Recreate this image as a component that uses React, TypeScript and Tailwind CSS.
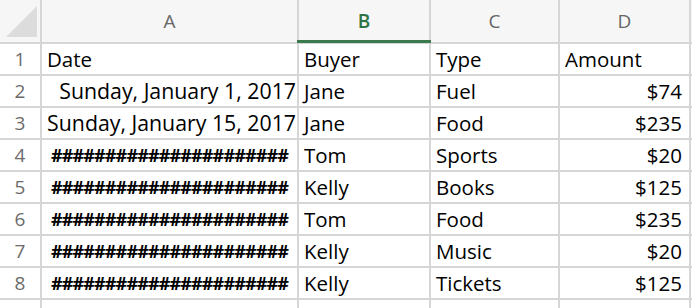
import React from 'react';

const font = { fontFamily: '"Open Sans", Lato, "Liberation Sans", sans-serif' };

type Row = { date: string; dateMode: 'text' | 'hash'; buyer: string; type: string; amount: string };

const rows: Row[] = [
  { date: 'Sunday, January 1, 2017', dateMode: 'text', buyer: 'Jane', type: 'Fuel', amount: '$74' },
  { date: 'Sunday, January 15, 2017', dateMode: 'text', buyer: 'Jane', type: 'Food', amount: '$235' },
  { date: '', dateMode: 'hash', buyer: 'Tom', type: 'Sports', amount: '$20' },
  { date: '', dateMode: 'hash', buyer: 'Kelly', type: 'Books', amount: '$125' },
  { date: '', dateMode: 'hash', buyer: 'Tom', type: 'Food', amount: '$235' },
  { date: '', dateMode: 'hash', buyer: 'Kelly', type: 'Music', amount: '$20' },
  { date: '', dateMode: 'hash', buyer: 'Kelly', type: 'Tickets', amount: '$125' },
];

const HASHES = '######################';

function ColHeader({ label, active }: { label: string; active?: boolean }) {
  return (
    <div className="relative flex items-center justify-center bg-[#f6f6f6]">
      <span className={active ? 'text-[19px] font-semibold text-[#2e7545]' : 'text-[19px] text-[#666666]'}>{label}</span>
      {active && <div className="absolute -left-[2px] -right-[2px] -bottom-[1px] h-[3px] bg-[#3b7a4f]" />}
    </div>
  );
}

function RowNum({ n }: { n: number | string }) {
  return <div className="flex items-center justify-center bg-white text-[19px] text-[#6b6b6b]">{n}</div>;
}

function Cell({ children, align = 'left', pad = 'px-[5px]' }: { children?: React.ReactNode; align?: 'left' | 'right' | 'center'; pad?: string }) {
  const j = align === 'right' ? 'justify-end' : align === 'center' ? 'justify-center' : 'justify-start';
  return <div className={`flex items-center overflow-hidden whitespace-nowrap bg-white text-[20.5px] text-black ${j} ${pad}`}>{children}</div>;
}

export default function App() {
  return (
    <div className="h-[308px] w-[692px] overflow-hidden bg-white" style={font}>
      <div className="grid grid-cols-[40px_255px_130px_127px_129px_1px] grid-rows-[42px_repeat(9,30px)] gap-[2px] bg-[#d6d6d6]">
        <div className="relative bg-[#f6f6f6]">
          <svg className="absolute left-[6px] top-[6px]" width="31" height="31" viewBox="0 0 31 31">
            <polygon points="31,0 31,31 0,31" fill="#dcdcdc" />
          </svg>
        </div>
        <ColHeader label="A" />
        <ColHeader label="B" active />
        <ColHeader label="C" />
        <ColHeader label="D" />
        <div className="bg-[#f6f6f6]" />

        <RowNum n={1} />
        <Cell>Date</Cell>
        <Cell>Buyer</Cell>
        <Cell>Type</Cell>
        <Cell>Amount</Cell>
        <div className="bg-white" />

        {rows.map((r, i) => (
          <React.Fragment key={i}>
            <RowNum n={i + 2} />
            {r.dateMode === 'text' ? (
              <Cell align="right" pad="pl-[2px] pr-[1px]">
                <span className="text-[21.3px]">{r.date}</span>
              </Cell>
            ) : (
              <Cell align="center">
                <span className="text-[18px] font-bold tracking-[-0.85px]">{HASHES}</span>
              </Cell>
            )}
            <Cell>{r.buyer}</Cell>
            <Cell>{r.type}</Cell>
            <Cell align="right" pad="pl-[5px] pr-[7px]">{r.amount}</Cell>
            <div className="bg-white" />
          </React.Fragment>
        ))}

        <RowNum n="" />
        <Cell />
        <Cell />
        <Cell />
        <Cell />
        <div className="bg-white" />
      </div>
    </div>
  );
}
